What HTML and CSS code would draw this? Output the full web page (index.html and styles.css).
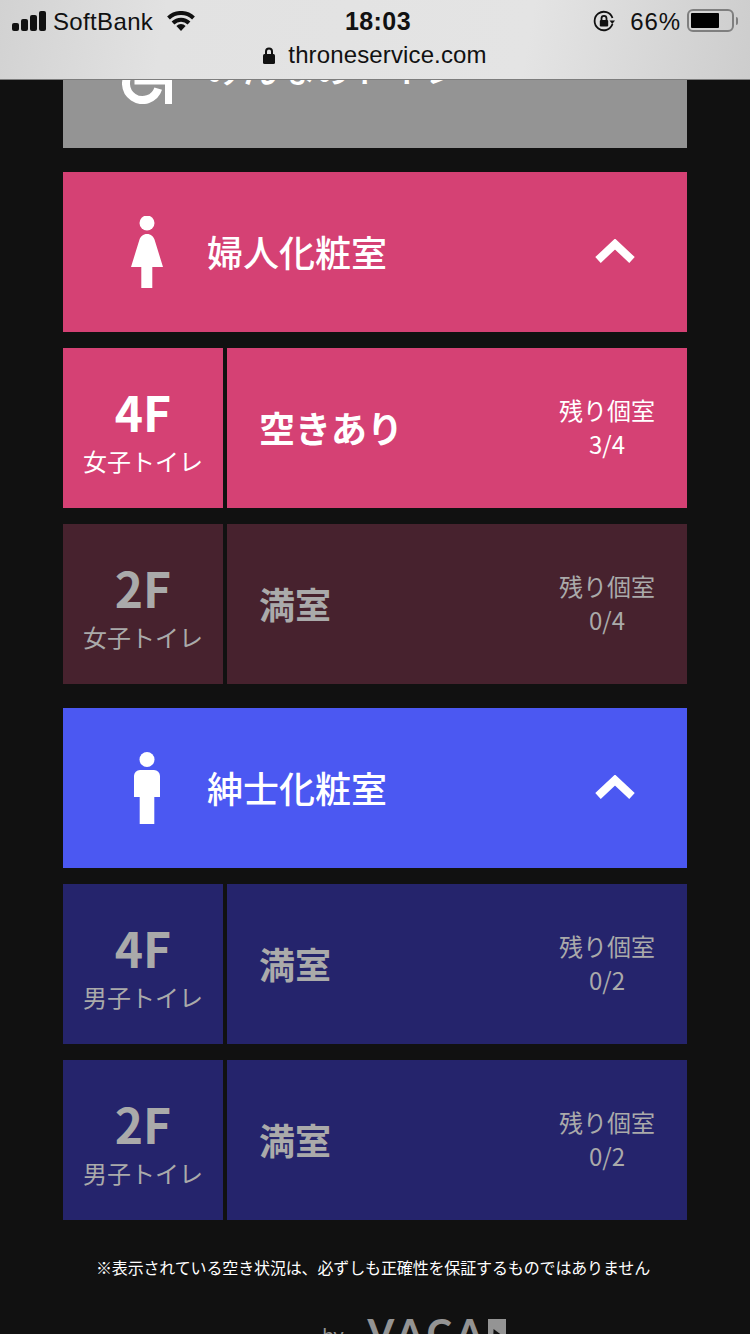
FILE: index.html
```html
<!DOCTYPE html>
<html lang="ja">

<head>
    <meta charset="UTF-8" />
    <meta name="viewport" content="width=device-width, initial-scale=1" />
    <title>トイレ空き状況</title>
    <link rel="stylesheet" href="styles.css">
</head>

<body>
    <header class="browser-bar">
        <div class="status-row">
            <div class="status-left">
                <svg class="signal" width="34" height="20" viewBox="0 0 34 20" aria-hidden="true">
                    <rect x="0" y="12" width="7" height="8" rx="2" />
                    <rect x="9" y="8" width="7" height="12" rx="2" />
                    <rect x="18" y="4" width="7" height="16" rx="2" />
                    <rect x="27" y="0" width="7" height="20" rx="2" />
                </svg>
                <span class="carrier">SoftBank</span>
                <svg class="wifi" width="28" height="20" viewBox="0 0 28 20" aria-hidden="true">
                    <path d="M1.500 7a18 18 0 0 1 25 0" />
                    <path d="M6 12a11.500 11.500 0 0 1 16 0" />
                    <path class="wifi-dot" d="M14 20l-4.600-5a6.500 6.500 0 0 1 9.200 0z" />
                </svg>
            </div>
            <span class="clock">18:03</span>
            <div class="status-right">
                <svg class="lock-rotate" width="22" height="22" viewBox="0 0 22 22" aria-hidden="true">
                    <path class="lock-ring" d="M19.500 14a9.200 9.200 0 1 1 0-6" />
                    <path class="lock-arrow" d="M16.500 10.500h5.500l-2.700 3.500z" />
                    <path class="lock-shackle" d="M8.500 10V8.300a2.500 2.500 0 0 1 5 0V10" />
                    <rect x="6.800" y="10" width="8.400" height="6.500" rx="1" />
                </svg>
                <span class="battery-pct">66%</span>
                <div class="battery">
                    <div class="battery-cell">
                        <div class="battery-level"></div>
                    </div>
                    <div class="battery-nub"></div>
                </div>
            </div>
        </div>
        <div class="url-row">
            <svg class="url-lock" width="12" height="17" viewBox="0 0 12 17" aria-hidden="true">
                <path class="url-shackle" d="M3 8V4.500a3 3 0 0 1 6 0V8" />
                <rect x="0" y="7" width="12" height="10" rx="1.500" />
            </svg>
            <span class="url-text">throneservice.com</span>
        </div>
    </header>

    <main class="page">
        <section class="room room-shared">
            <div class="room-head">
                <svg class="room-icon room-icon-wide" width="50" height="72" viewBox="0 0 50 72" aria-hidden="true">
                    <circle cx="18" cy="7" r="7" />
                    <path class="chair-wheel" d="M9.900 38.900A16.500 16.500 0 1 0 36.200 56.600" />
                    <path class="chair-frame" d="M16 20v29h30.500v23" />
                </svg>
                <h2 class="room-title">みんなのトイレ</h2>
            </div>
        </section>

        <section class="room room-women">
            <div class="room-head">
                <svg class="room-icon" width="40" height="72" viewBox="0 0 40 72" aria-hidden="true">
                    <circle cx="20" cy="7" r="7.500" />
                    <path d="M20 18c4 0 6.500 2.500 7.500 5.500L36 51H25.300v21H14.300V51H4l8.500-27.500c1-3 3.500-5.500 7.500-5.500z" />
                </svg>
                <h2 class="room-title">婦人化粧室</h2>
                <svg class="chevron" width="40" height="24" viewBox="0 0 40 24" aria-hidden="true">
                    <path d="M3 21L20 5l17 16" />
                </svg>
            </div>
            <div class="stall">
                <div class="stall-floor">
                    <span class="floor-num">4F</span>
                    <span class="floor-label">女子トイレ</span>
                </div>
                <div class="stall-info">
                    <span class="stall-state">空きあり</span>
                    <div class="stall-count">
                        <span>残り個室</span>
                        <span>3/4</span>
                    </div>
                </div>
            </div>
            <div class="stall is-full">
                <div class="stall-floor">
                    <span class="floor-num">2F</span>
                    <span class="floor-label">女子トイレ</span>
                </div>
                <div class="stall-info">
                    <span class="stall-state">満室</span>
                    <div class="stall-count">
                        <span>残り個室</span>
                        <span>0/4</span>
                    </div>
                </div>
            </div>
        </section>

        <section class="room room-men">
            <div class="room-head">
                <svg class="room-icon" width="40" height="72" viewBox="0 0 40 72" aria-hidden="true">
                    <circle cx="20" cy="7.500" r="7.500" />
                    <path d="M13 18h14a6 6 0 0 1 6 6v21h-5.700v27H12.700V45H7V24a6 6 0 0 1 6-6z" />
                </svg>
                <h2 class="room-title">紳士化粧室</h2>
                <svg class="chevron" width="40" height="24" viewBox="0 0 40 24" aria-hidden="true">
                    <path d="M3 21L20 5l17 16" />
                </svg>
            </div>
            <div class="stall is-full">
                <div class="stall-floor">
                    <span class="floor-num">4F</span>
                    <span class="floor-label">男子トイレ</span>
                </div>
                <div class="stall-info">
                    <span class="stall-state">満室</span>
                    <div class="stall-count">
                        <span>残り個室</span>
                        <span>0/2</span>
                    </div>
                </div>
            </div>
            <div class="stall is-full">
                <div class="stall-floor">
                    <span class="floor-num">2F</span>
                    <span class="floor-label">男子トイレ</span>
                </div>
                <div class="stall-info">
                    <span class="stall-state">満室</span>
                    <div class="stall-count">
                        <span>残り個室</span>
                        <span>0/2</span>
                    </div>
                </div>
            </div>
        </section>

        <p class="notice">※表示されている空き状況は、必ずしも正確性を保証するものではありません</p>

        <footer class="brand">
            <span class="brand-by">by</span>
            <div class="brand-name">
                <span>VACA</span>
                <span class="brand-n">N</span>
            </div>
        </footer>
    </main>
</body>

</html>
```

FILE: styles.css
```css
/* Reset */

* {
    margin: 0;
    padding: 0;
    box-sizing: border-box;
}

html,
body {
    height: 1334px;
    overflow: hidden;
}

body {
    font-family: "Noto Sans CJK JP", "Noto Sans", sans-serif;
    background: #111111;
    color: #ffffff;
}

/* Browser bar */

.browser-bar {
    position: fixed;
    top: 0;
    left: 0;
    right: 0;
    z-index: 10;
    height: 80px;
    display: flex;
    flex-direction: column;
    background: linear-gradient(100deg, #d2d2d2 0%, #e2e2e2 22%, #e4e4e4 70%, #cdcdcd 100%);
    border-bottom: 1px solid #7d7d7d;
    color: #111111;
    font-family: "Liberation Sans", Arial, sans-serif;
    font-size: 24px;
}

.status-row {
    height: 41px;
    padding: 0 12px;
    display: grid;
    grid-template-columns: 1fr auto 1fr;
    align-items: center;
}

.status-left,
.status-right {
    display: flex;
    align-items: center;
}

.status-right {
    justify-content: flex-end;
}

.signal {
    fill: #111111;
}

.carrier {
    margin: 2px 0 0 7px;
    letter-spacing: 0.35px;
}

.wifi {
    margin-left: 14px;
    fill: none;
    stroke: #111111;
    stroke-width: 4;
}

.wifi-dot {
    fill: #111111;
    stroke: none;
}

.clock {
    margin: 2px 0 0 6px;
    font-size: 25px;
    font-weight: 700;
    letter-spacing: 0.4px;
}

.lock-rotate {
    fill: #111111;
}

.lock-ring,
.lock-shackle {
    fill: none;
    stroke: #111111;
    stroke-width: 1.8;
}

.battery-pct {
    margin: 2px 0 0 15px;
    letter-spacing: 0.9px;
}

.battery {
    margin-left: 6px;
    display: flex;
    align-items: center;
    gap: 2px;
}

.battery-cell {
    width: 47px;
    height: 23px;
    padding: 2px;
    border: 2px solid #7f7f7f;
    border-radius: 6px;
}

.battery-level {
    width: 28px;
    height: 100%;
    border-radius: 1px;
    background: #000000;
}

.battery-nub {
    width: 2px;
    height: 8px;
    border-radius: 0 2px 2px 0;
    background: #7f7f7f;
}

.url-row {
    flex: 1;
    padding-bottom: 10px;
    display: flex;
    justify-content: center;
    align-items: center;
    gap: 13px;
}

.url-lock {
    fill: #111111;
}

.url-shackle {
    fill: none;
    stroke: #111111;
    stroke-width: 2;
}

.url-text {
    letter-spacing: 0.13px;
}

/* Room lists */

.page {
    margin-top: -12px;
    padding: 0 63px;
    display: flex;
    flex-direction: column;
    gap: 24px;
}

.room {
    display: flex;
    flex-direction: column;
    gap: 16px;
}

.room-head {
    height: 160px;
    padding: 0 52px 0 64px;
    display: flex;
    align-items: center;
    gap: 40px;
}

.room-shared .room-head {
    padding-left: 59px;
    gap: 35px;
    background: #949494;
}

.room-women .room-head {
    background: #d54174;
}

.room-men .room-head {
    background: #4b58f2;
}

.room-icon {
    flex: none;
    fill: #ffffff;
}

.chair-wheel,
.chair-frame {
    fill: none;
    stroke: #ffffff;
}

.chair-wheel {
    stroke-width: 8;
}

.chair-frame {
    stroke-width: 7;
}

.room-title {
    flex: 1;
    margin-bottom: 2px;
    font-size: 36px;
    font-weight: 500;
    line-height: 1;
}

.chevron {
    flex: none;
    margin-bottom: 3px;
    fill: none;
    stroke: #ffffff;
    stroke-width: 8;
}

/* Stall rows */

.stall {
    height: 160px;
    display: flex;
    gap: 4px;
}

.stall-floor {
    width: 160px;
    padding-top: 6px;
    display: flex;
    flex-direction: column;
    align-items: center;
    justify-content: center;
    gap: 4px;
}

.stall-info {
    flex: 1;
    padding: 0 32px;
    display: flex;
    align-items: center;
    justify-content: space-between;
}

.room-women .stall-floor,
.room-women .stall-info {
    background: #d54174;
}

.room-women .is-full .stall-floor,
.room-women .is-full .stall-info {
    background: #47222e;
}

.room-men .stall-floor,
.room-men .stall-info {
    background: #25246c;
}

.floor-num {
    font-size: 48px;
    font-weight: 700;
    line-height: 56px;
}

.floor-label {
    font-size: 24px;
    line-height: 36px;
}

.stall-state {
    margin-bottom: 2px;
    font-size: 36px;
    font-weight: 700;
    line-height: 1;
}

.stall-count {
    padding-bottom: 2px;
    display: flex;
    flex-direction: column;
    align-items: center;
    font-size: 24px;
    line-height: 34px;
}

.is-full {
    color: #aaaaaa;
}

/* Footer */

.notice {
    margin-top: 11px;
    padding-right: 4px;
    font-size: 16px;
    letter-spacing: -0.14px;
    line-height: 24px;
    text-align: center;
}

.brand {
    margin-top: 10px;
    padding-left: 78px;
    display: flex;
    justify-content: center;
    align-items: flex-start;
    gap: 24px;
    color: #949494;
}

.brand-by {
    margin-top: 13px;
    font-size: 20px;
    line-height: 1;
    font-family: "Liberation Sans", Arial, sans-serif;
}

.brand-name {
    display: flex;
    align-items: flex-start;
    font-family: "Lato", sans-serif;
    font-size: 38px;
    font-weight: 900;
    letter-spacing: 4.5px;
    line-height: 1;
}

/* last letter of the wordmark sits in a solid block with a wedge cut out */
.brand-n {
    position: relative;
    width: 18px;
    height: 38px;
    margin-top: 6px;
    overflow: hidden;
    background: #949494;
    font-size: 18px;
    letter-spacing: 0;
    line-height: 70px;
}

.brand-n::after {
    content: '';
    position: absolute;
    top: 10px;
    left: 5px;
    width: 13px;
    height: 28px;
    background: #111111;
    clip-path: polygon(1px 0, 100% 9px, 100% 100%, 0 100%);
}
```
